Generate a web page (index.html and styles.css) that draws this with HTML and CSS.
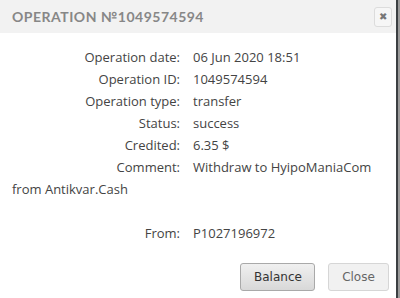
FILE: index.html
```html
<!DOCTYPE html>
<html lang="en">
  <head>
    <meta charset="UTF-8" />
    <meta name="viewport" content="width=device-width, initial-scale=1.0" />
    <title>Operation</title>
    <link rel="stylesheet" href="styles.css">
  </head>
  <body>
    <div class="dialog">
      <div class="header">
        <span class="title">OPERATION №1049574594</span>
        <button class="close-x">&#10006;</button>
      </div>
      <div class="content">
        <p class="row"><span class="label">Operation date:</span>06 Jun 2020 18:51</p>
        <p class="row"><span class="label">Operation ID:</span>1049574594</p>
        <p class="row"><span class="label">Operation type:</span>transfer</p>
        <p class="row"><span class="label">Status:</span>success</p>
        <p class="row"><span class="label">Credited:</span>6.35 $</p>
        <p class="row"><span class="label">Comment:</span>Withdraw to HyipoManiaCom from Antikvar.Cash</p>
        <p class="row empty">&nbsp;</p>
        <p class="row"><span class="label">From:</span>P1027196972</p>
      </div>
      <div class="footer">
        <button class="btn balance">Balance</button>
        <button class="btn close">Close</button>
      </div>
    </div>
  </body>
</html>
```

FILE: styles.css
```css
body {
  margin: 0;
  background: #fff;
}
.dialog {
  width: 396px;
  height: 298px;
  border-right: 2px solid #3b3f42;
  box-shadow: 2px 0 0 #9a9a9a;
  background: #fff;
}
.header {
  display: flex;
  justify-content: space-between;
  align-items: center;
  height: 33px;
  padding: 0 4px 0 12px;
  background: #f2f2f2;
}
.title {
  font-family: Lato, sans-serif;
  font-size: 14px;
  font-weight: bold;
  letter-spacing: 0.5px;
  color: #878787;
}
.close-x {
  width: 18px;
  height: 20px;
  padding: 0;
  border: 1px solid #dcdcdc;
  border-radius: 3px;
  background: #f6f6f6;
  color: #777;
  font-size: 10px;
  line-height: 18px;
  cursor: pointer;
}
.content {
  padding: 13px 12px 0 12px;
  font-family: "Open Sans", sans-serif;
  font-size: 13px;
  color: #444;
}
.row {
  margin: 0;
  line-height: 22px;
}
.label {
  display: inline-block;
  width: 168px;
  padding-right: 13px;
  text-align: right;
}
.footer {
  display: flex;
  justify-content: flex-end;
  gap: 13px;
  padding: 19px 7px 0 0;
}
.btn {
  height: 28px;
  padding: 0 13px;
  border-radius: 3px;
  font-family: "DejaVu Sans", sans-serif;
  font-size: 12px;
  color: #333;
  cursor: pointer;
}
.balance {
  width: 75px;
  border: 1px solid #a9a9a9;
  background: linear-gradient(#f0f0f0, #d8d8d8);
}
.close {
  width: 61px;
  border: 1px solid #d6d6d6;
  background: #f1f1f1;
  color: #666;
}
```
